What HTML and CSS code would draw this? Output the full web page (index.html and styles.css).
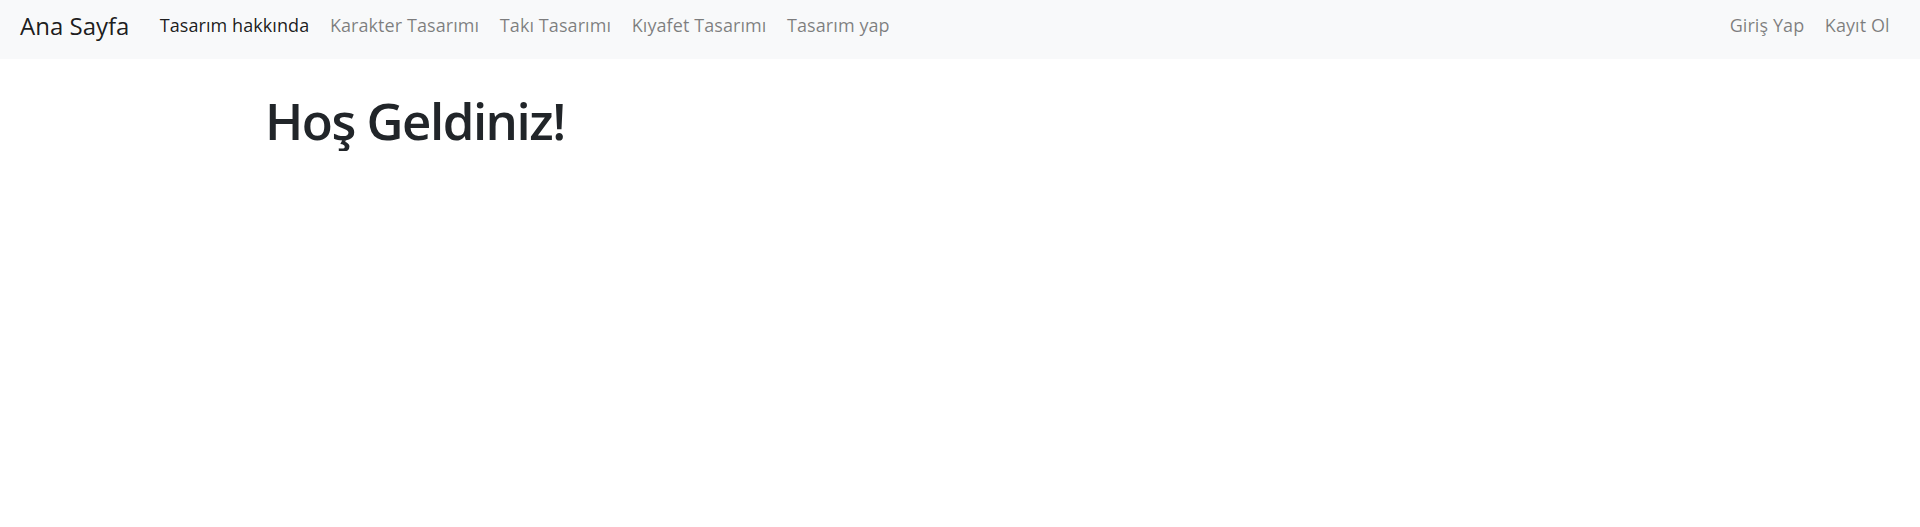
FILE: index.html
```html
<!DOCTYPE html>
<html lang="tr">
<head>
<meta charset="utf-8">
<title>Ana Sayfa</title>
<link rel="stylesheet" href="styles.css">
</head>
<body>
<nav class="navbar">
  <a class="brand" href="#">Ana Sayfa</a>
  <ul class="nav">
    <li><a class="nav-link active" href="#">Tasarım hakkında</a></li>
    <li><a class="nav-link" href="#">Karakter Tasarımı</a></li>
    <li><a class="nav-link" href="#">Takı Tasarımı</a></li>
    <li><a class="nav-link" href="#">Kıyafet Tasarımı</a></li>
    <li><a class="nav-link" href="#">Tasarım yap</a></li>
  </ul>
  <ul class="nav nav-right">
    <li><a class="nav-link" href="#">Giriş Yap</a></li>
    <li><a class="nav-link" href="#">Kayıt Ol</a></li>
  </ul>
</nav>
<main class="content">
  <h1 class="title">Hoş Geldiniz!</h1>
</main>
</body>
</html>
```
FILE: styles.css
```css
html, body {
  margin: 0;
  padding: 0;
  background: #ffffff;
  font-family: "Open Sans", "Noto Sans", sans-serif;
  color: #212529;
}

.navbar {
  display: flex;
  align-items: center;
  height: 59px;
  box-sizing: border-box;
  padding: 0 20px 8px 20px;
  background: #f8f9fa;
}

.brand {
  font-size: 24px;
  line-height: 1.5;
  color: rgba(0, 0, 0, 0.9);
  text-decoration: none;
  margin-right: 20px;
}

.nav {
  display: flex;
  list-style: none;
  margin: 0;
  padding: 0;
}

.nav-right {
  margin-left: auto;
}

.nav-link {
  display: block;
  padding: 0 10.3px;
  font-size: 18px;
  line-height: 1.5;
  letter-spacing: 0.08px;
  color: rgba(0, 0, 0, 0.5);
  text-decoration: none;
}

.nav-link.active {
  color: rgba(0, 0, 0, 0.9);
}

.content {
  padding: 0 265px;
}

.title {
  margin: 31px 0 0;
  font-size: 51px;
  font-weight: 600;
  letter-spacing: -1.5px;
  line-height: 1.2;
  color: #212529;
}
```
